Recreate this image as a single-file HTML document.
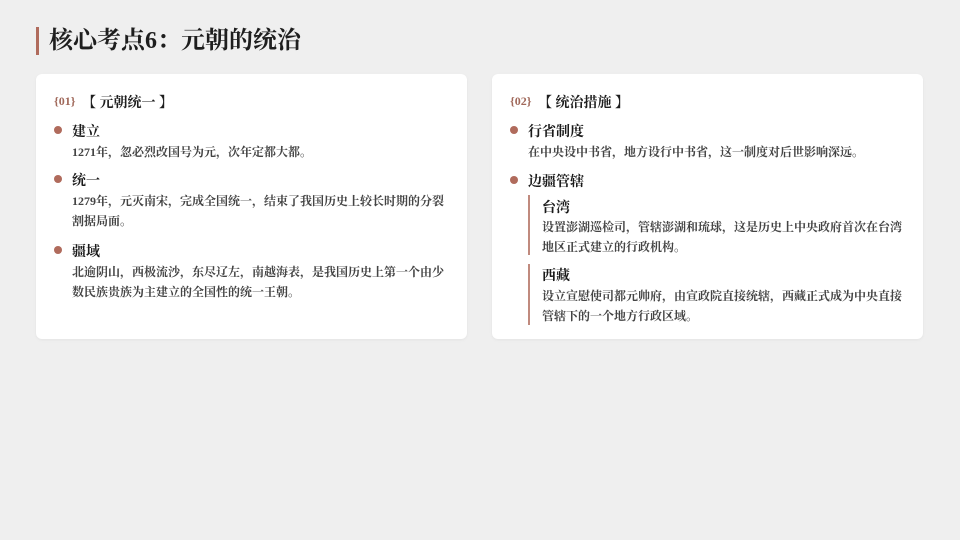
<!DOCTYPE html>
<html><head><meta charset="utf-8"><style>
*{margin:0;padding:0;box-sizing:border-box}
body{width:960px;height:540px;background:#efefef;font-family:"Liberation Serif","Noto Serif CJK SC",serif;color:#222;position:relative;overflow:hidden}
.title{position:absolute;left:36px;top:27px;height:28px;border-left:3px solid #b06b5c;padding-left:10px;font-size:24px;font-weight:bold;line-height:28px;color:#1e1e1e}
.card{position:absolute;top:74px;width:431px;height:265px;background:#fff;border-radius:6px;box-shadow:0 1px 3px rgba(0,0,0,.05)}
.abs{position:absolute;white-space:nowrap}
.num{font-size:12px;color:#a0685a;font-weight:bold}
.h{font-size:14px;font-weight:bold;color:#1e1e1e}
.dot{position:absolute;width:8px;height:8px;border-radius:50%;background:#b06b5c}
.it{font-size:14px;font-weight:bold;color:#1a1a1a}
.tx{font-size:12px;color:#444;line-height:20px;white-space:normal;font-weight:bold}
.bar{position:absolute;width:2px;background:#c08a7e}
</style></head><body>
<div class="title">核心考点6：元朝的统治</div>
<div class="card" style="left:36px">
 <div class="abs num" style="left:18px;top:20px">{01}</div>
 <div class="abs h" style="left:46px;top:18px">【 元朝统一 】</div>
 <div class="dot" style="left:18px;top:52px"></div>
 <div class="abs it" style="left:36px;top:47px">建立</div>
 <div class="abs tx" style="left:36px;top:68px">1271年，忽必烈改国号为元，次年定都大都。</div>
 <div class="dot" style="left:18px;top:101px"></div>
 <div class="abs it" style="left:36px;top:96px">统一</div>
 <div class="abs tx" style="left:36px;top:117px;width:380px">1279年，元灭南宋，完成全国统一，结束了我国历史上较长时期的分裂割据局面。</div>
 <div class="dot" style="left:18px;top:172px"></div>
 <div class="abs it" style="left:36px;top:167px">疆域</div>
 <div class="abs tx" style="left:36px;top:188px;width:380px">北逾阴山，西极流沙，东尽辽左，南越海表，是我国历史上第一个由少数民族贵族为主建立的全国性的统一王朝。</div>
</div>
<div class="card" style="left:492px">
 <div class="abs num" style="left:18px;top:20px">{02}</div>
 <div class="abs h" style="left:46px;top:18px">【 统治措施 】</div>
 <div class="dot" style="left:18px;top:52px"></div>
 <div class="abs it" style="left:36px;top:47px">行省制度</div>
 <div class="abs tx" style="left:36px;top:68px">在中央设中书省，地方设行中书省，这一制度对后世影响深远。</div>
 <div class="dot" style="left:18px;top:102px"></div>
 <div class="abs it" style="left:36px;top:97px">边疆管辖</div>
 <div class="bar" style="left:36px;top:121px;height:60px"></div>
 <div class="abs it" style="left:50px;top:123px">台湾</div>
 <div class="abs tx" style="left:50px;top:143px;width:370px">设置澎湖巡检司，管辖澎湖和琉球，这是历史上中央政府首次在台湾地区正式建立的行政机构。</div>
 <div class="bar" style="left:36px;top:190px;height:61px"></div>
 <div class="abs it" style="left:50px;top:191px">西藏</div>
 <div class="abs tx" style="left:50px;top:212px;width:370px">设立宣慰使司都元帅府，由宣政院直接统辖，西藏正式成为中央直接管辖下的一个地方行政区域。</div>
</div>
</body></html>
